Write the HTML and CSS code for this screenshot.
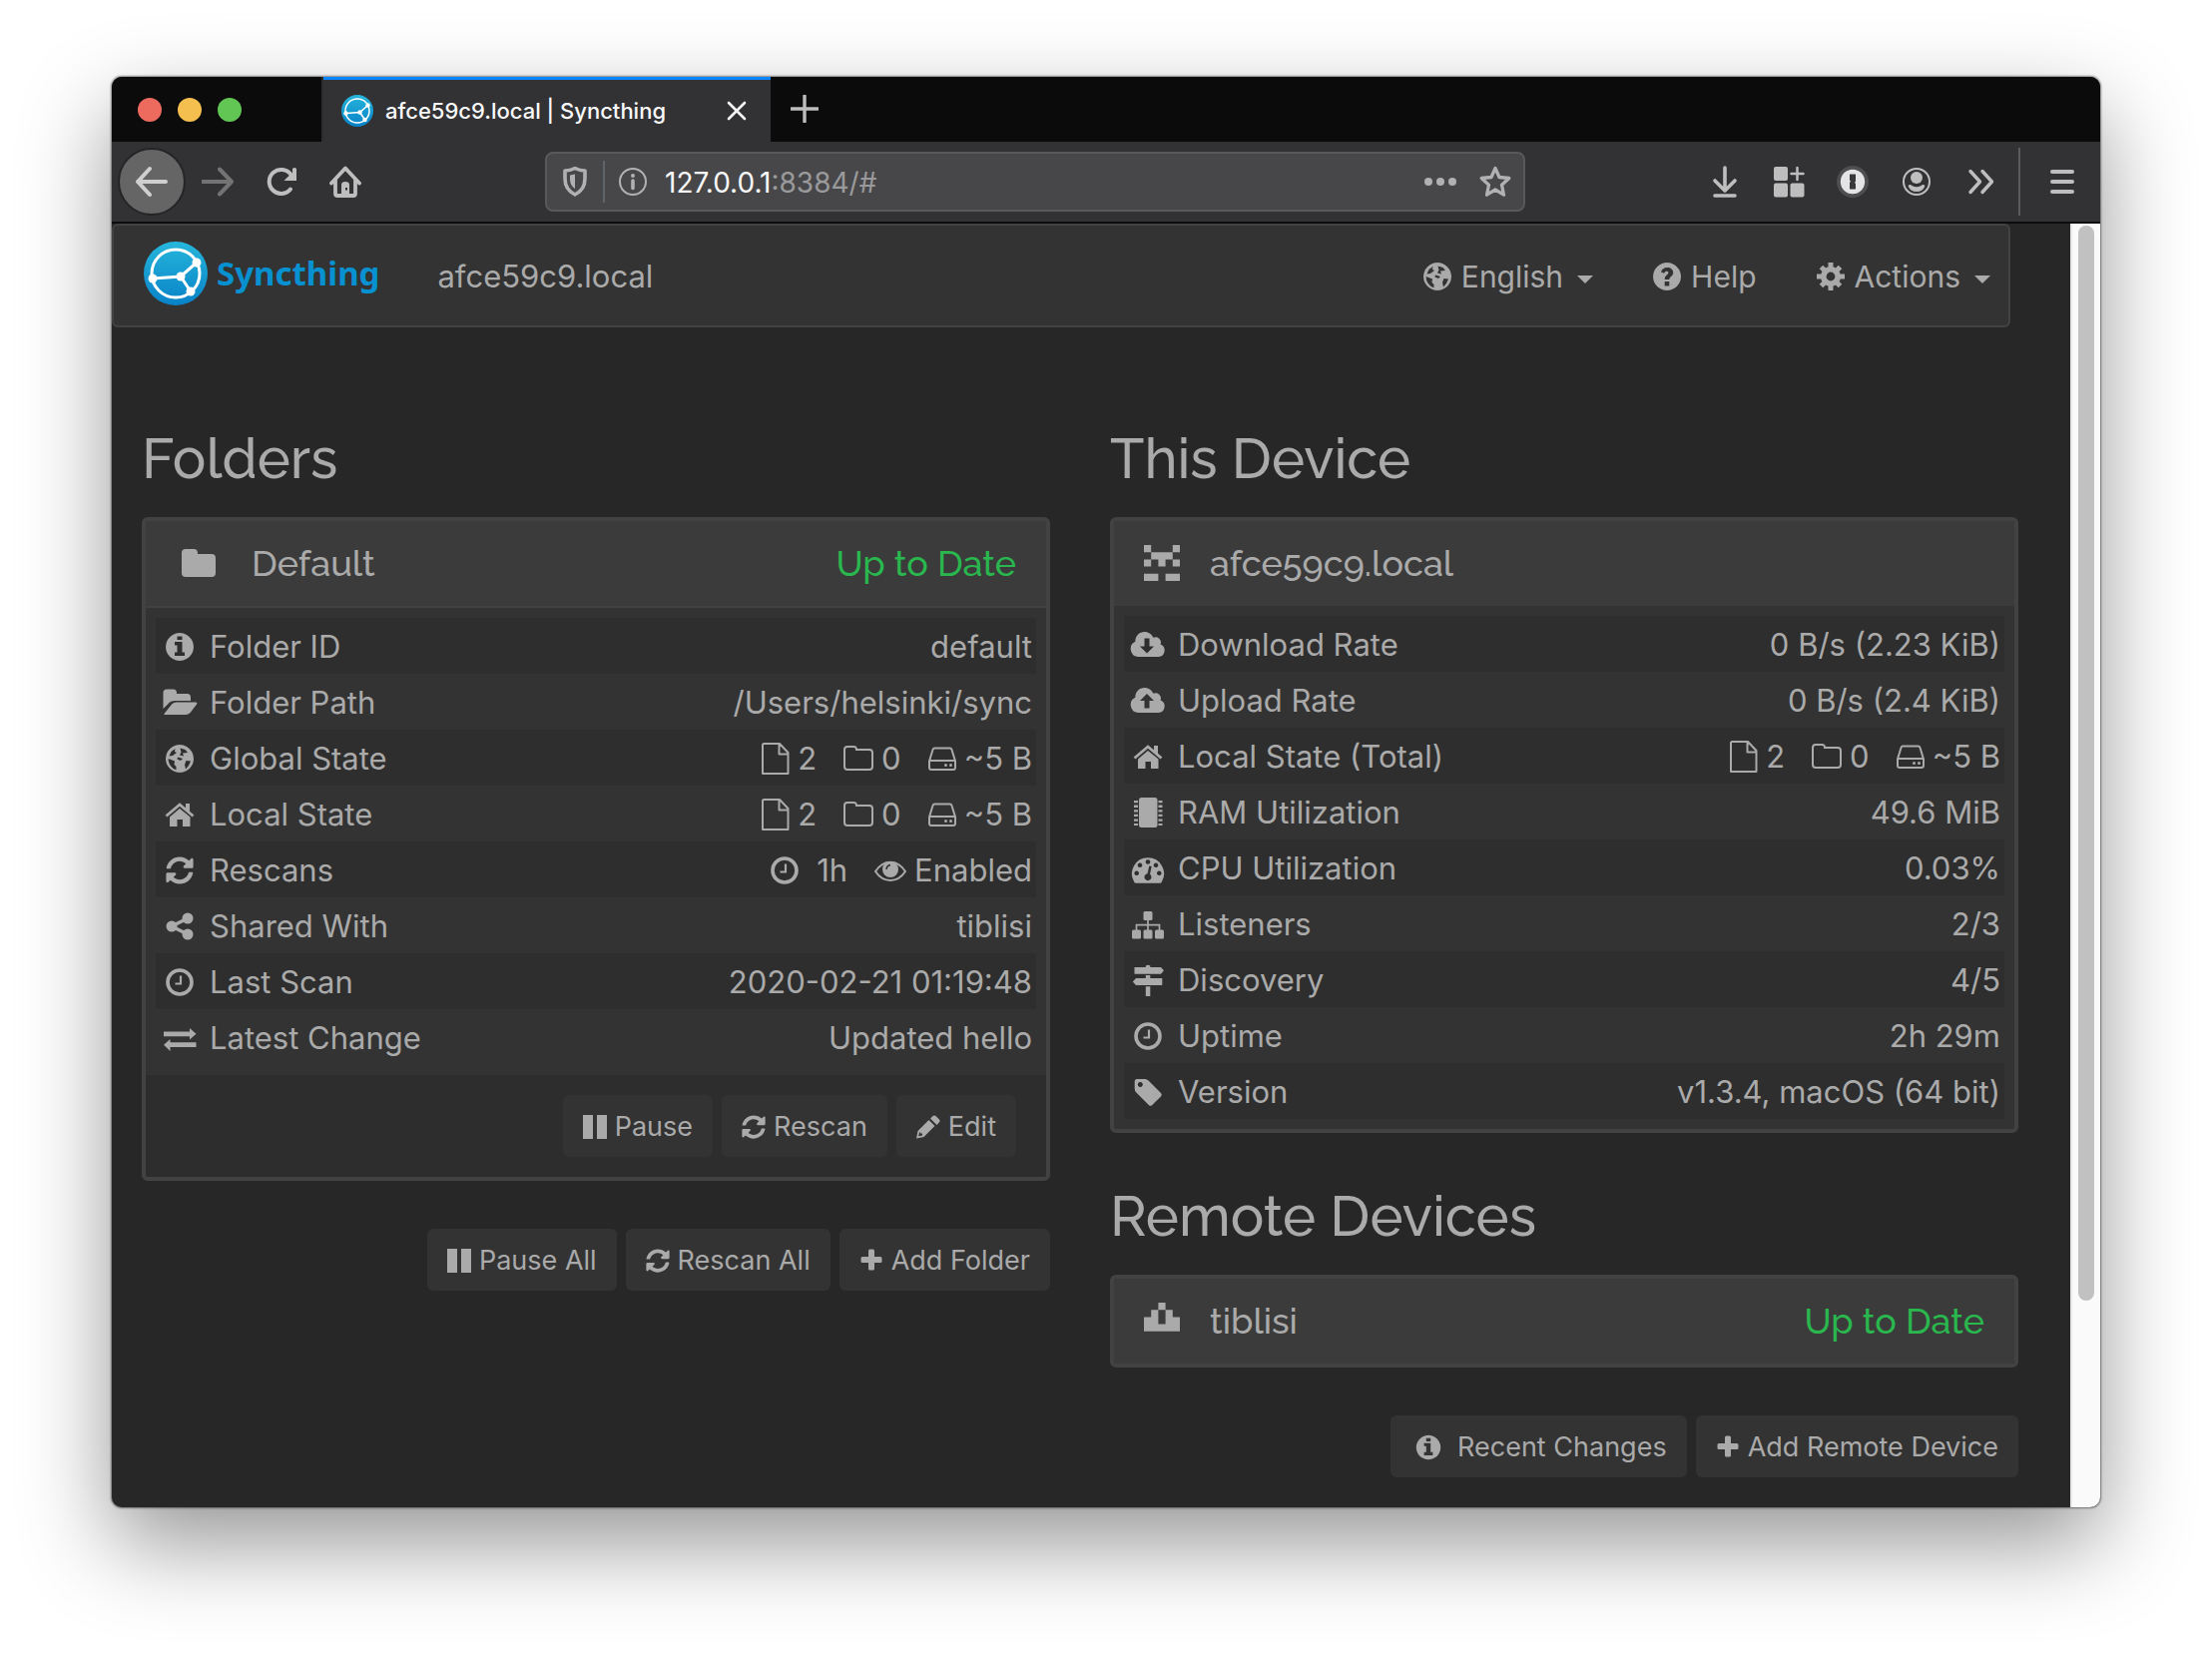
FILE: index.html
```html
<!DOCTYPE html>
<html lang="en">
<head>
<meta charset="utf-8">
<title>afce59c9.local | Syncthing</title>
<link rel="stylesheet" href="styles.css">
</head>
<body>
<svg class="sprite" aria-hidden="true">
  <defs>
    <linearGradient id="logo-fill" x1="0" y1="0" x2="0" y2="1">
      <stop offset="0" stop-color="#26b6db"/><stop offset="1" stop-color="#0882c8"/>
    </linearGradient>
  </defs>
  <symbol id="logo" viewBox="0 0 64 64">
    <circle cx="32" cy="32" r="32" fill="url(#logo-fill)"/>
    <circle cx="32" cy="32" r="24" fill="none" stroke="#fff" stroke-width="3"/>
    <path d="M9 37l28-2 16-14M37 35l10 15" fill="none" stroke="#fff" stroke-width="3"/>
    <g fill="#fff"><circle cx="9" cy="37" r="4.500"/><circle cx="37" cy="35" r="4.500"/><circle cx="53" cy="21" r="4.500"/><circle cx="47" cy="50" r="4.500"/></g>
  </symbol>
  <symbol id="info" viewBox="0 0 36 32"><path fill-rule="evenodd" d="M18 2a14 14 0 1 0 .01 0zM15.500 5.500h5V9h-5zM13 11h7.500v10.500H23V25H13v-3.500h2.500v-7H13z"/></symbol>
  <symbol id="folder" viewBox="0 0 36 32"><path d="M1 6a4 4 0 0 1 4-4h8a4 4 0 0 1 4 4v1h14a4 4 0 0 1 4 4v15a4 4 0 0 1-4 4H5a4 4 0 0 1-4-4z"/></symbol>
  <symbol id="folder-open" viewBox="0 0 36 32"><path d="M1.500 22V6A3.500 3.500 0 0 1 5 2.500h6.500A3.500 3.500 0 0 1 15 6v1h10.500a3.500 3.500 0 0 1 3.500 3.500V14H13.500c-3 0-5.500 1.200-7.200 3.200z"/><path d="M2.700 26.800l7-8.800c1.200-1.600 3-2.500 5-2.500H34c1.300 0 1.800.9 1 2l-6 8c-1.200 1.600-3 2.500-5 2.500H3.700c-1.300 0-1.700-.4-1-1.200z"/></symbol>
  <symbol id="globe" viewBox="0 0 36 32"><path fill-rule="evenodd" d="M18 2a14 14 0 1 0 .01 0zM6.600 16l6.400 2.500-.5 3.500 2 2v3.200A11.700 11.700 0 0 1 6.600 16zM24.500 18l4.500.5-2 4.500-3 3.500-1-4.500zM18.500 5.500l5 1.500 2.500 3-5 .5 1 3-4-1 1.500-3zM9.500 9l4-3-.5 3 2 1-4 3-3.500.5zM16 14.500l5 1.500-2 2-3.500-1.500z"/></symbol>
  <symbol id="home" viewBox="0 0 36 32"><path d="M4.500 17.500L18 6l13.500 11.500" fill="none" stroke="currentColor" stroke-width="2.800"/><path d="M24 5h4v9l-4-3.500zM8 18.500L18 10l10.500 8.500V28h-7.500v-7h-5.500v7H8z"/></symbol>
  <symbol id="sync" viewBox="0 0 512 512"><path d="M370.720 133.280C339.458 104.008 298.888 87.962 255.848 88c-77.458.068-144.328 53.178-162.791 126.850-1.344 5.363-6.122 9.150-11.651 9.150H24.103c-7.498 0-13.194-6.807-11.807-14.176C33.933 94.924 134.813 8 256 8c66.448 0 126.791 26.136 171.315 68.685L463.030 40.970C478.149 25.851 504 36.559 504 57.941V192c0 13.255-10.745 24-24 24H345.941c-21.382 0-32.090-25.851-16.971-40.971l41.750-41.749zM32 296h134.059c21.382 0 32.090 25.851 16.971 40.971l-41.750 41.750c31.262 29.273 71.835 45.319 114.876 45.280 77.418-.070 144.315-53.144 162.787-126.849 1.344-5.363 6.122-9.150 11.651-9.150h57.304c7.498 0 13.194 6.807 11.807 14.176C478.067 417.076 377.187 504 256 504c-66.448 0-126.791-26.136-171.315-68.685L48.970 471.030C33.851 486.149 8 475.441 8 454.059V320c0-13.255 10.745-24 24-24z"/></symbol>
  <symbol id="share" viewBox="0 0 36 32"><path d="M26 8L10 16l16 8" fill="none" stroke="currentColor" stroke-width="3.600"/><circle cx="10" cy="16" r="5.500"/><circle cx="26" cy="8" r="5.500"/><circle cx="26" cy="24" r="5.500"/></symbol>
  <symbol id="clock" viewBox="0 0 36 32"><g fill="none" stroke="currentColor"><circle cx="18" cy="16" r="12" stroke-width="3.600"/><path d="M19 9.500v8h-5.500" stroke-width="2.200"/></g></symbol>
  <symbol id="exchange" viewBox="0 0 36 32"><path d="M2 9.500h26V6l6.500 5.800L28 17.500v-3.300H2zM34.500 20.200H8.500V17L2 22.800 8.500 29v-4h26z"/></symbol>
  <symbol id="cloud-down" viewBox="0 0 36 32"><path fill-rule="evenodd" d="M8.500 28a8 8 0 0 1-3.200-15.200C5.300 7 9.300 3 14.500 3c4.300 0 7.500 2.500 8.800 5.800a5.300 5.300 0 0 1 7.300 6.700A6.500 6.500 0 0 1 28.600 28zM14.500 9.500v8H10l7 7 7-7h-4.500v-8z"/></symbol>
  <symbol id="cloud-up" viewBox="0 0 36 32"><path fill-rule="evenodd" d="M8.500 28a8 8 0 0 1-3.200-15.200C5.300 7 9.300 3 14.500 3c4.300 0 7.500 2.500 8.800 5.800a5.300 5.300 0 0 1 7.300 6.700A6.500 6.500 0 0 1 28.600 28zM14.500 23.500V16H10l7-7 7 7h-4.500v7.500z"/></symbol>
  <symbol id="chip" viewBox="0 0 36 32"><rect x="9" y="1" width="18.500" height="30" rx="2.500"/><path d="M6 4v25M30.500 4v25" fill="none" stroke="currentColor" stroke-width="4" stroke-dasharray="2.300 2.300"/></symbol>
  <symbol id="gauge" viewBox="0 0 36 32"><path fill-rule="evenodd" d="M18 5.300a16 16 0 0 1 13.700 24.400 2 2 0 0 1-1.600 1H5.900a2 2 0 0 1-1.600-1A16 16 0 0 1 18 5.300zM18 7.200a2.300 2.300 0 1 0 .01 0zM10 10.500a2.300 2.300 0 1 0 .01 0zM26 10.500a2.300 2.300 0 1 0 .01 0zM6.700 18.500a2.300 2.300 0 1 0 .01 0zM29.300 18.500a2.300 2.300 0 1 0 .01 0zM19.300 13.500l-1.800 7.700a3.500 3.500 0 1 0 2.500.6l1.700-7.800z"/></symbol>
  <symbol id="sitemap" viewBox="0 0 36 32"><rect x="13.500" y="3" width="9" height="9" rx="1.500"/><rect x="2" y="21.500" width="9" height="9" rx="1.500"/><rect x="13.500" y="21.500" width="9" height="9" rx="1.500"/><rect x="25" y="21.500" width="9" height="9" rx="1.500"/><path d="M18 11v11M6.500 22v-5.300h23V22" fill="none" stroke="currentColor" stroke-width="1.700"/></symbol>
  <symbol id="signs" viewBox="0 0 36 32"><path d="M15.800 3V1.500q2.200-1.500 4.500 0V3H31l3 3.300-3 3.400H4.500V3zM15.800 11h4.500v3h12v7H6l-3.200-3.500L6 14h9.800zM15.800 22.300h4.500V32h-4.500z"/></symbol>
  <symbol id="tag" viewBox="0 0 36 32"><path fill-rule="evenodd" d="M4.700 5.500A2.500 2.500 0 0 1 7.200 3h7.300c1.500 0 3 .6 4 1.600L31 17a2.500 2.500 0 0 1 0 3.500L22.300 29a2.500 2.500 0 0 1-3.500 0L6.300 16.500c-1-1-1.600-2.500-1.600-4zM10.300 6a2.500 2.500 0 1 0 .01 0z"/></symbol>
  <symbol id="file-o" viewBox="0 0 28 32"><path d="M2 1h16l8.500 9V31H1V2zM17.500 1v10.500h9" fill="none" stroke="currentColor" stroke-width="2" stroke-linejoin="round"/></symbol>
  <symbol id="folder-o" viewBox="0 0 30 32"><path d="M1 7a3 3 0 0 1 3-3h6.500a2.500 2.500 0 0 1 2.500 2.500v.5h13a3 3 0 0 1 3 3v14a3 3 0 0 1-3 3H4a3 3 0 0 1-3-3z" fill="none" stroke="currentColor" stroke-width="2"/></symbol>
  <symbol id="disk-o" viewBox="0 0 28 32"><path d="M1 18.500V25a2 2 0 0 0 2 2h22a2 2 0 0 0 2-2v-6.500L23.500 7A2 2 0 0 0 21.600 5.500H6.400A2 2 0 0 0 4.500 7zM1.500 18h25" fill="none" stroke="currentColor" stroke-width="2"/><circle cx="17.500" cy="22.500" r="1.500"/><circle cx="22.500" cy="22.500" r="1.500"/></symbol>
  <symbol id="eye" viewBox="0 0 32 32"><path d="M1 17C9 4.500 23 4.500 31 17 23 29 9 29 1 17z" fill="none" stroke="currentColor" stroke-width="2"/><circle cx="16" cy="15" r="8"/><path d="M12 15q.5-4 4-4.500" fill="none" stroke="#2e2e2e" stroke-width="1.500"/></symbol>
  <symbol id="pause" viewBox="0 0 24 24"><path d="M0 0h10v24H0zM14 0h10v24H14z"/></symbol>
  <symbol id="pencil" viewBox="1 0 24 24"><path fill-rule="evenodd" d="M1 23.500l1.500-7.500L13.500 5l6 6L8.500 22zM15 3.500L17.500 1q1.500-1.200 3 0l3.500 3.500q1 1.500 0 2.800L21.500 10zM4 17.500l-.8 3.800 3.800-.8v-2H5.200v-1z"/></symbol>
  <symbol id="plus" viewBox="0 0 22 24"><path d="M8 2q0-1.500 1.500-1.500h3Q14 .5 14 2v6h6q1.500 0 1.500 1.500v3Q21.500 14 20 14h-6v6q0 1.500-1.500 1.500h-3Q8 21.500 8 20v-6H2Q.5 14 .5 12.500v-3Q.5 8 2 8h6z"/></symbol>
  <symbol id="help" viewBox="0 0 28 28"><path fill-rule="evenodd" d="M14 0a14 14 0 1 0 .01 0zM11.700 19h4.600v4.500h-4.600zM8 9.500C9 6.500 11 5 14.200 5c3.500 0 6 2 6 5 0 4-3.900 4-3.900 7h-4.600c0-4.500 3.700-4.500 3.700-6.700 0-1-.7-1.500-1.700-1.500-1.200 0-1.900.6-2.600 2z"/></symbol>
  <symbol id="gear" viewBox="0 0 28 28"><circle cx="14" cy="14" r="7.200" fill="none" stroke="currentColor" stroke-width="5.600"/><path d="M14 0v5M14 23v5M0 14h5M23 14h5M4.500 4.500L8 8M20 20l3.500 3.500M23.500 4.500L20 8M8 20l-3.500 3.500" fill="none" stroke="currentColor" stroke-width="5"/></symbol>
  <symbol id="ident-a" viewBox="0 0 5 5"><path d="M0 0h1v1H0zM4 0h1v1H4zM1 1h3v1H1zM0 2h1v1H0zM2 2h1v1H2zM4 2h1v1H4zM0 4h2v1H0zM3 4h2v1H3z"/></symbol>
  <symbol id="ident-b" viewBox="0 0 5 5"><path d="M2 0h1v1H2zM1 1h1v2h1V1h1v1h1v2H0V2h1z"/></symbol>
</svg>

<div class="window">
  <header class="tabs">
    <div class="lights"><span class="light red"></span><span class="light amber"></span><span class="light green"></span></div>
    <div class="tab">
      <svg class="favicon" viewBox="0 0 64 64"><use href="#logo"/></svg>
      <span class="tab-title">afce59c9.local | Syncthing</span>
      <button class="tool tab-close" aria-label="Close tab"><svg width="20" height="20" viewBox="0 0 20 20"><path d="M2 2l16 16M18 2L2 18" fill="none" stroke="#f5f5f5" stroke-width="2.600" stroke-linecap="round"/></svg></button>
    </div>
    <button class="tool new-tab" aria-label="New tab"><svg width="28" height="28" viewBox="0 0 28 28"><path d="M14 1v26M1 14h26" fill="none" stroke="#bdbdbd" stroke-width="3.400" stroke-linecap="round"/></svg></button>
  </header>

  <div class="toolbar">
    <button class="tool back" aria-label="Back"><svg width="32" height="32" viewBox="0 0 32 32"><path d="M30 16H2M14 3L2 16l12 13" class="line"/></svg></button>
    <button class="tool forward" aria-label="Forward"><svg width="32" height="32" viewBox="0 0 32 32"><path d="M1 16h29M18 3.500L30 16 18 28.500" class="line"/></svg></button>
    <button class="tool" aria-label="Reload"><svg width="32" height="32" viewBox="0 0 32 32"><path d="M25 23.500A12 12 0 1 1 25.500 9" fill="none" stroke="currentColor" stroke-width="4" stroke-linecap="round"/><path d="M31 3v12H18.500l4-4 4.500-3.500V3q2-2 4 0z"/></svg></button>
    <button class="tool" aria-label="Home"><svg width="32" height="32" viewBox="0 0 32 32"><path d="M2 17.500L16 2.500l14 15M6 14v14q0 2 2 2h16q2 0 2-2V14" fill="none" stroke="currentColor" stroke-width="3.800" stroke-linejoin="round" stroke-linecap="round"/><path fill-rule="evenodd" d="M12 30V19q0-3 4-3t4 3v11zM16 22h2v2.500h-2z"/></svg></button>
    <div class="urlbar">
      <svg width="28" height="32" viewBox="0 0 28 32"><path d="M4 5q5 0 10-2.500Q19 5 24 5v8c0 8-4 13-10 16C8 26 4 21 4 13z" fill="none" stroke="currentColor" stroke-width="3.600" stroke-linejoin="round"/><path d="M14 8.500v14.500c-3-2-5-5-5-10V9.500z"/></svg>
      <span class="url-rule"></span>
      <svg width="28" height="28" viewBox="0 0 28 28"><circle cx="14" cy="14" r="13" fill="none" stroke="currentColor" stroke-width="2"/><path d="M14 13v7.500" stroke="currentColor" stroke-width="3.600" stroke-linecap="round"/><circle cx="14" cy="8" r="2"/></svg>
      <a class="url" href="#"><span class="host">127.0.0.1</span>:8384/#</a>
      <svg width="34" height="10" viewBox="0 0 34 10"><circle cx="5" cy="5" r="4"/><circle cx="17" cy="5" r="4"/><circle cx="29" cy="5" r="4"/></svg>
      <svg class="star" width="32" height="32" viewBox="0 0 32 32"><path d="M16 2.500l4 9 9.800 1-7.300 6.700 2 10L16 24l-8.500 5.200 2-10L2.200 12.500l9.800-1z" fill="none" stroke="currentColor" stroke-width="3.300" stroke-linejoin="round"/></svg>
    </div>
    <button class="tool" aria-label="Downloads"><svg width="32" height="32" viewBox="0 0 32 32"><path d="M16 2v22M6 15l10 10 10-10M6 30h20" fill="none" stroke="currentColor" stroke-width="3.600" stroke-linecap="round" stroke-linejoin="round"/></svg></button>
    <button class="tool" aria-label="Apps"><svg width="32" height="32" viewBox="0 0 32 32"><rect x="1" y="1" width="14" height="14" rx="2"/><rect x="1" y="17.500" width="14" height="14" rx="2"/><rect x="17.500" y="17.500" width="14" height="14" rx="2"/><path d="M24.500 2v12M18.500 8h12" stroke="currentColor" stroke-width="2.500" stroke-linecap="round"/></svg></button>
    <button class="tool" aria-label="Password manager"><svg width="32" height="32" viewBox="0 0 32 32"><circle cx="16" cy="16" r="16" fill="#4e4e50"/><circle cx="16" cy="16" r="12.200" fill="#e4e4e6"/><path d="M13 8.500h6v7l-1 1.500 1 1v5.500h-6V17l1-1.500-1-1z" fill="#38383a"/></svg></button>
    <button class="tool" aria-label="Account"><svg width="32" height="32" viewBox="0 0 32 32"><circle cx="16" cy="16" r="13" fill="none" stroke="currentColor" stroke-width="2"/><circle cx="16" cy="12" r="6"/><path d="M7.500 20q2-2 4 0 4.500 2.500 9 0 2-2 4 0-2 6-8.500 6t-8.500-6z"/></svg></button>
    <button class="tool" aria-label="More tools"><svg width="32" height="32" viewBox="0 0 32 32"><path d="M6 5.500L15.500 16 6 26.500M18 5.500L27.500 16 18 26.500" fill="none" stroke="currentColor" stroke-width="3.400" stroke-linecap="round" stroke-linejoin="round"/></svg></button>
    <span class="tool-rule"></span>
    <button class="tool" aria-label="Menu"><svg width="32" height="32" viewBox="0 0 32 32"><path d="M6 6h20M6 16h20M6 26h20" stroke="currentColor" stroke-width="4" stroke-linecap="round"/></svg></button>
  </div>

  <div class="viewport">
    <div class="page">
      <nav class="navbar">
        <a class="brand" href="#"><svg class="logo" viewBox="0 0 64 64"><use href="#logo"/></svg>Syncthing</a>
        <span class="nav-name">afce59c9.local</span>
        <a class="nav-item" href="#"><svg class="icon-round" viewBox="4 2 28 28"><use href="#globe" width="36" height="32"/></svg>English<span class="caret"></span></a>
        <a class="nav-item" href="#"><svg class="icon-round"><use href="#help"/></svg>Help</a>
        <a class="nav-item" href="#"><svg class="icon-round"><use href="#gear"/></svg>Actions<span class="caret"></span></a>
      </nav>

      <main class="columns">
        <section class="column">
          <h3>Folders</h3>
          <div class="panel">
            <div class="panel-heading ruled">
              <svg class="icon heading-folder"><use href="#folder"/></svg>
              <span class="panel-title">Default</span>
              <span class="status">Up to Date</span>
            </div>
            <div class="panel-body">
              <table>
                <tr><th><svg class="icon"><use href="#info"/></svg>Folder ID</th><td>default</td></tr>
                <tr><th><svg class="icon"><use href="#folder-open"/></svg>Folder Path</th><td>/Users/helsinki/sync</td></tr>
                <tr><th><svg class="icon"><use href="#globe"/></svg>Global State</th><td><span class="stats"><span class="stat"><svg class="icon-file"><use href="#file-o"/></svg>2</span><span class="stat"><svg class="icon-dir"><use href="#folder-o"/></svg>0</span><span class="stat"><svg class="icon-file"><use href="#disk-o"/></svg>~5 B</span></span></td></tr>
                <tr><th><svg class="icon"><use href="#home"/></svg>Local State</th><td><span class="stats"><span class="stat"><svg class="icon-file"><use href="#file-o"/></svg>2</span><span class="stat"><svg class="icon-dir"><use href="#folder-o"/></svg>0</span><span class="stat"><svg class="icon-file"><use href="#disk-o"/></svg>~5 B</span></span></td></tr>
                <tr><th><svg class="icon icon-sync"><use href="#sync"/></svg>Rescans</th><td><span class="stats"><span class="stat interval"><svg class="icon"><use href="#clock"/></svg>1h</span><span class="stat"><svg class="icon-eye"><use href="#eye"/></svg>Enabled</span></span></td></tr>
                <tr><th><svg class="icon"><use href="#share"/></svg>Shared With</th><td>tiblisi</td></tr>
                <tr><th><svg class="icon"><use href="#clock"/></svg>Last Scan</th><td>2020-02-21 01:19:48</td></tr>
                <tr><th><svg class="icon"><use href="#exchange"/></svg>Latest Change</th><td>Updated hello</td></tr>
              </table>
            </div>
            <div class="panel-footer">
              <button class="btn"><svg class="icon-btn"><use href="#pause"/></svg>Pause</button>
              <button class="btn"><svg class="icon-btn"><use href="#sync"/></svg>Rescan</button>
              <button class="btn"><svg class="icon-btn"><use href="#pencil"/></svg>Edit</button>
            </div>
          </div>
          <div class="actions">
            <button class="btn"><svg class="icon-btn"><use href="#pause"/></svg>Pause All</button>
            <button class="btn"><svg class="icon-btn"><use href="#sync"/></svg>Rescan All</button>
            <button class="btn"><svg class="icon-btn"><use href="#plus"/></svg>Add Folder</button>
          </div>
        </section>

        <section class="column">
          <h3>This Device</h3>
          <div class="panel">
            <div class="panel-heading">
              <svg class="identicon"><use href="#ident-a"/></svg>
              <span class="panel-title">afce59c9.local</span>
            </div>
            <div class="panel-body">
              <table>
                <tr><th><svg class="icon"><use href="#cloud-down"/></svg>Download Rate</th><td>0 B/s (2.23 KiB)</td></tr>
                <tr><th><svg class="icon"><use href="#cloud-up"/></svg>Upload Rate</th><td>0 B/s (2.4 KiB)</td></tr>
                <tr><th><svg class="icon"><use href="#home"/></svg>Local State (Total)</th><td><span class="stats"><span class="stat"><svg class="icon-file"><use href="#file-o"/></svg>2</span><span class="stat"><svg class="icon-dir"><use href="#folder-o"/></svg>0</span><span class="stat"><svg class="icon-file"><use href="#disk-o"/></svg>~5 B</span></span></td></tr>
                <tr><th><svg class="icon"><use href="#chip"/></svg>RAM Utilization</th><td>49.6 MiB</td></tr>
                <tr><th><svg class="icon"><use href="#gauge"/></svg>CPU Utilization</th><td>0.03%</td></tr>
                <tr><th><svg class="icon"><use href="#sitemap"/></svg>Listeners</th><td>2/3</td></tr>
                <tr><th><svg class="icon"><use href="#signs"/></svg>Discovery</th><td>4/5</td></tr>
                <tr><th><svg class="icon"><use href="#clock"/></svg>Uptime</th><td>2h 29m</td></tr>
                <tr><th><svg class="icon"><use href="#tag"/></svg>Version</th><td>v1.3.4, macOS (64 bit)</td></tr>
              </table>
            </div>
          </div>
          <h3>Remote Devices</h3>
          <div class="panel">
            <div class="panel-heading">
              <svg class="identicon"><use href="#ident-b"/></svg>
              <span class="panel-title">tiblisi</span>
              <span class="status">Up to Date</span>
            </div>
          </div>
          <div class="actions">
            <button class="btn"><svg class="icon-info"><use href="#info"/></svg>Recent Changes</button>
            <button class="btn"><svg class="icon-btn"><use href="#plus"/></svg>Add Remote Device</button>
          </div>
        </section>
      </main>
    </div>
    <div class="scrollbar"><div class="thumb"></div></div>
  </div>
</div>
</body>
</html>
```

FILE: styles.css
```css
* { box-sizing: border-box; }

body {
  margin: 0;
  padding: 77px 112px 148px;
  background: #fff;
  color: #aaa;
  font-family: Inter, "Liberation Sans", sans-serif;
  font-size: 31px;
  line-height: 44px;
}

a { color: inherit; text-decoration: none; }
button { font: inherit; color: inherit; border: 0; background: none; padding: 0; }
svg { display: block; flex: none; fill: currentColor; }
.sprite { position: absolute; width: 0; height: 0; }

.window {
  border-radius: 10px;
  overflow: hidden;
  background: #272727;
  box-shadow: 0 0 2px 1px rgba(0, 0, 0, .45), 0 36px 90px rgba(0, 0, 0, .42);
}

/* Tab strip */
.tabs { display: flex; height: 65px; background: #0b0b0b; }
.lights { display: flex; align-items: center; gap: 16px; width: 212px; padding-left: 26px; border-right: 2px solid #2d2d2d; }
.light { width: 24px; height: 24px; border-radius: 50%; }
.red { background: #ed6a5e; }
.amber { background: #f5bf4f; }
.green { background: #62c655; }
.tab {
  display: flex;
  align-items: center;
  width: 448px;
  padding: 0 22px 0 18px;
  border-top: 3px solid #0a84ff;
  background: #323234;
  color: #f9f9fa;
  font-size: 22px;
  font-weight: 500;
}
.favicon { width: 32px; height: 32px; margin-right: 12px; }
.tab-title { flex: 1; white-space: nowrap; }

/* Toolbar */
.toolbar {
  display: flex;
  align-items: center;
  height: 82px;
  padding: 0 6px;
  border-bottom: 2px solid #0c0c0d;
  background: #323234;
  color: #bebebf;
}
.tool { display: flex; align-items: center; justify-content: center; width: 64px; height: 64px; flex: none; }
.tab-close { width: 24px; }
.new-tab { width: 68px; }
.back { width: 68px; height: 68px; border: 2px solid #252527; border-radius: 50%; background: #656566; color: #cfcfcf; }
.forward { color: #737374; }
.line { fill: none; stroke: currentColor; stroke-width: 4; stroke-linecap: round; stroke-linejoin: round; }
.urlbar {
  display: flex;
  align-items: center;
  flex: 1;
  height: 60px;
  margin: 0 168px;
  padding: 0 12px 0 14px;
  border: 2px solid #59595b;
  border-radius: 8px;
  background: #474749;
  color: #b1b1b3;
}
.url-rule { width: 2px; height: 42px; margin: 0 14px; background: #5f646b; }
.url { flex: 1; margin-left: 18px; padding-top: 2px; color: #9a9a9c; font-size: 28px; }
.host { color: #f9f9fa; }
.star { margin-left: 22px; }
.tool-rule { width: 2px; height: 68px; margin: 0 10px 0 6px; background: #5b5b5d; }

/* Page */
.viewport { display: flex; }
.page { flex: 1; padding-bottom: 30px; }
.scrollbar { width: 30px; padding: 2px 6px; border-left: 2px solid #e8e8e8; background: #fafafa; }
.thumb { width: 16px; height: 84%; border-radius: 8px; background: #c1c1c1; }

.navbar {
  display: flex;
  align-items: center;
  height: 104px;
  margin-right: 60px;
  padding: 2px 18px 0 30px;
  border: 2px solid #424242;
  border-radius: 6px;
  background: #333;
}
.brand { display: flex; align-items: center; gap: 9px; margin-bottom: 6px; color: #0891d1; font-family: "Noto Sans", sans-serif; font-size: 33px; font-weight: 700; }
.logo { width: 64px; height: 64px; }
.nav-name { flex: 1; margin-left: 58px; }
.nav-item { display: flex; align-items: center; gap: 10px; margin-left: 60px; font-size: 30px; }
.icon-round { width: 28px; height: 28px; }
.caret { margin: 6px 0 0 4px; border: 8px solid transparent; border-top-color: currentColor; border-bottom: 0; }

.columns { display: flex; gap: 60px; margin: 95px 52px 0 30px; }
.column { flex: 1 1 0; min-width: 0; }
h3 { margin: 0 0 23px; color: #aaa; font: 500 56px/72px Raleway, Lato, sans-serif; }
.panel + h3 { margin-top: 47px; }

.panel { border: 4px solid #424242; border-radius: 6px; background: #333; overflow: hidden; }
.panel-heading {
  display: flex;
  align-items: center;
  gap: 30px;
  height: 85px;
  padding: 0 30px 2px;
  background: #3b3b3b;
  font: 500 36px/40px Raleway, Lato, sans-serif;
}
.ruled { height: 87px; border-bottom: 2px solid #424242; }
.panel-title { flex: 1; }
.status { color: #29b74e; }
.heading-folder { margin: 0 5px; }
.identicon { width: 36px; height: 36px; }

.panel-body { padding: 10px; }
table { width: 100%; border-collapse: collapse; }
tr { height: 56px; }
tr:nth-child(odd) { background: #2e2e2e; }
th, td { height: 56px; padding: 2px 0 0; white-space: nowrap; }
th { display: flex; align-items: center; gap: 12px; padding-left: 6px; font-weight: 400; }
td { padding-right: 4px; text-align: right; }
.icon { width: 36px; height: 32px; }
.icon-sync { height: 28px; }
.stats { display: flex; justify-content: flex-end; gap: 27px; }
.stat { display: flex; align-items: center; gap: 8px; }
.interval { gap: 14px; }
.icon-file { width: 28px; height: 32px; }
.icon-dir { width: 30px; height: 32px; }
.icon-eye { width: 32px; height: 32px; }

.panel-footer { display: flex; justify-content: flex-end; gap: 9px; padding: 20px 30px; background: #2d2d2d; }
.actions { display: flex; justify-content: flex-end; gap: 9px; margin-top: 48px; }
.btn {
  display: flex;
  align-items: center;
  gap: 8px;
  height: 62px;
  padding: 2px 20px 0;
  border-radius: 6px;
  background: #333;
  font-size: 27px;
  white-space: nowrap;
}
.icon-btn { width: 24px; height: 24px; }
.icon-info { width: 36px; height: 28px; margin-right: 3px; }
```
